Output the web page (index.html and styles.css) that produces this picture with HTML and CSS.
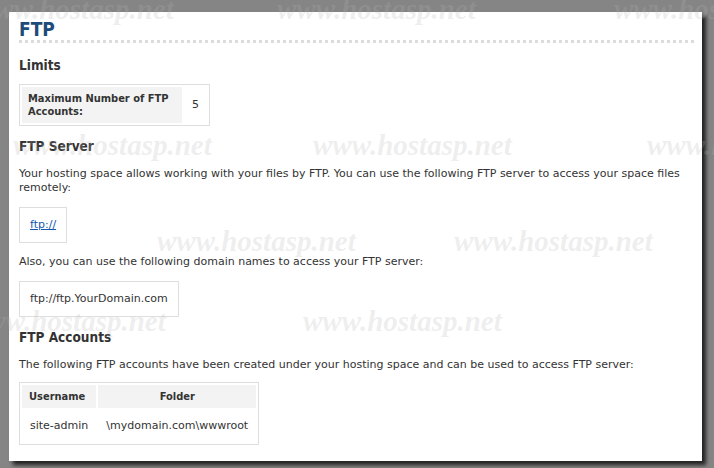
FILE: index.html
```html
<!DOCTYPE html>
<html>
<head>
<meta charset="utf-8">
<title>FTP</title>
<link rel="stylesheet" href="styles.css">
</head>
<body>
<div class="panel">
  <h1 class="title">FTP</h1>
  <h2 class="section first">Limits</h2>
  <table class="grid limits">
    <tr>
      <th class="label">Maximum Number of FTP Accounts:</th>
      <td class="value">5</td>
    </tr>
  </table>
  <h2 class="section">FTP Server</h2>
  <p class="text">Your hosting space allows working with your files by FTP. You can use the following FTP server to access your space files remotely:</p>
  <div class="box"><a class="link" href="#">ftp://</a></div>
  <p class="text">Also, you can use the following domain names to access your FTP server:</p>
  <div class="box">ftp://ftp.YourDomain.com</div>
  <h2 class="section">FTP Accounts</h2>
  <p class="text">The following FTP accounts have been created under your hosting space and can be used to access FTP server:</p>
  <table class="grid accounts">
    <tr>
      <th class="col-user">Username</th>
      <th class="col-folder">Folder</th>
    </tr>
    <tr>
      <td>site-admin</td>
      <td>\mydomain.com\wwwroot</td>
    </tr>
  </table>
</div>
<div class="watermarks" aria-hidden="true">
  <span class="wm" style="left:-25px;top:-5px">www.hostasp.net</span>
  <span class="wm" style="left:277px;top:-5px">www.hostasp.net</span>
  <span class="wm" style="left:614px;top:-5px">www.hostasp.net</span>
  <span class="wm" style="left:13px;top:131px">www.hostasp.net</span>
  <span class="wm" style="left:313px;top:131px">www.hostasp.net</span>
  <span class="wm" style="left:647px;top:131px">www.hostasp.net</span>
  <span class="wm" style="left:157px;top:227px">www.hostasp.net</span>
  <span class="wm" style="left:454px;top:227px">www.hostasp.net</span>
  <span class="wm" style="left:-33px;top:307px">www.hostasp.net</span>
  <span class="wm" style="left:303px;top:307px">www.hostasp.net</span>
</div>
</body>
</html>
```
FILE: styles.css
```css
html, body {
  margin: 0;
  height: 100%;
}
body {
  position: relative;
  overflow: hidden;
  background: #858585;
  padding: 12px 0 0 9px;
  box-sizing: border-box;
  font-family: "DejaVu Sans", sans-serif;
  font-size: 11px;
  line-height: 14px;
  color: #333;
}
.panel {
  width: 693px;
  height: 449px;
  box-sizing: border-box;
  padding: 6px 8px 0 10px;
  background: #fff;
  box-shadow: 4px 4px 4px rgba(0, 0, 0, 0.75);
}
.title {
  margin: 0;
  font-family: "DejaVu Sans Condensed", "DejaVu Sans", sans-serif;
  font-size: 19px;
  line-height: 22px;
  font-weight: bold;
  color: #1d4b7a;
  padding-bottom: 3px;
  background: repeating-linear-gradient(to right, #dcdcdc 0 3px, transparent 3px 6px) left bottom / 100% 3px no-repeat;
}
.section {
  margin: 12px 0 0;
  font-family: "DejaVu Sans Condensed", "DejaVu Sans", sans-serif;
  font-size: 13.5px;
  line-height: 17px;
  font-weight: bold;
  color: #333;
}
.section.first {
  margin-top: 14px;
}
.text {
  margin: 12px 0 0;
}
.grid {
  border: 1px solid #dedede;
  border-collapse: separate;
  border-spacing: 2px;
  margin-top: 10px;
}
.grid th {
  background: #f3f3f3;
  font-family: "DejaVu Sans Condensed", "DejaVu Sans", sans-serif;
  font-weight: bold;
  line-height: 13px;
  text-align: left;
  vertical-align: middle;
}
.limits .label {
  width: 148px;
  padding: 5px 6px;
}
.limits .value {
  padding: 0 8px;
  vertical-align: middle;
}
.box {
  display: inline-block;
  margin-top: 12px;
  padding: 10px;
  border: 1px solid #dedede;
}
.link {
  color: #1158ad;
  text-decoration: underline;
}
.accounts {
  margin-top: 10px;
}
.accounts th {
  padding: 5px 7px;
}
.accounts .col-folder {
  text-align: center;
}
.accounts td {
  padding: 9px 8px;
}
.watermarks {
  position: absolute;
  inset: 0;
  pointer-events: none;
  overflow: hidden;
}
.wm {
  position: absolute;
  white-space: nowrap;
  font-family: "Liberation Serif", "Times New Roman", serif;
  font-style: italic;
  font-weight: bold;
  font-size: 29px;
  line-height: 29px;
  color: rgba(180, 180, 180, 0.22);
}
```
